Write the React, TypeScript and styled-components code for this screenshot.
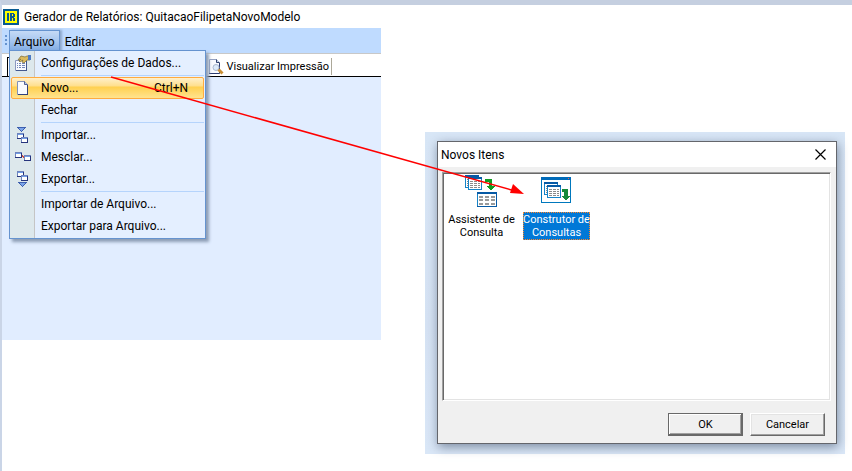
import React from "react";
import styled, { createGlobalStyle, css } from "styled-components";

const Global = createGlobalStyle`
  * { box-sizing: border-box; }
  html, body { margin: 0; background: #fff; }
  body { font: 12px/16px Roboto, "Open Sans", sans-serif; color: #000; }
  button { font: inherit; color: inherit; }
  svg { flex: none; }
`;

const Page = styled.div`
  position: relative;
  display: flex;
  flex-direction: column;
  min-height: 100vh;
  border-top: 5px solid #c5cfe0;
  border-left: 2px solid #cad5e7;
`;

const TitleBar = styled.header`
  display: flex;
  align-items: center;
  gap: 5px;
  height: 23px;
  padding-left: 1px;
  white-space: nowrap;
`;

const Title = styled.h1`
  margin: 0;
  font-size: 12px;
  font-weight: 400;
`;

const Workspace = styled.div`
  display: grid;
  grid-template-columns: 379fr 44fr 420fr 7fr;
  align-items: start;
`;

const Editor = styled.main`
  display: flex;
  flex-direction: column;
  min-width: 0;
  background: #e1edff;
`;

const MenuBar = styled.nav`
  position: relative;
  display: flex;
  align-items: flex-end;
  height: 25px;
  padding-left: 7px;
  background: #bfdbff;
`;

const Grip = styled.svg`
  position: absolute;
  left: 3px;
  top: 7px;
`;

const MenuTitle = styled.button<{ $open?: boolean }>`
  height: 23px;
  padding: 0 4px;
  border: 1px solid transparent;
  border-bottom: 0;
  background: transparent;
  ${(p) =>
    p.$open &&
    css`
      border-color: #6593cf;
      background: linear-gradient(#c5daf6, #a3c4ee 50%, #78a5df);
      box-shadow: 2px 0 2px #8ea9cd;
    `}
`;

const Menu = styled.div`
  position: absolute;
  z-index: 2;
  left: 7px;
  top: 22px;
  width: 197px;
  padding: 1px;
  border: 1px solid #6593cf;
  background: linear-gradient(to right, #dde8ec 24px, #c5c5c5 24px 25px, #e4efff 25px);
  box-shadow: 3px 3px 3px #8d9db5;
`;

const MenuItem = styled.button<{ $hot?: boolean }>`
  display: grid;
  grid-template-columns: 22px 1fr auto;
  column-gap: 7px;
  align-items: center;
  width: 100%;
  height: 22px;
  padding: 0 15px 0 0;
  border: 1px solid transparent;
  border-radius: 2px;
  background: transparent;
  text-align: left;
  white-space: nowrap;
  ${(p) =>
    p.$hot &&
    css`
      border-color: #ffab3f;
      background: linear-gradient(#fff0cb, #ffdf8c 40%, #ffd04f 45%, #ffe38f);
    `}
`;

const IconCell = styled.span`
  display: flex;
  justify-content: center;
`;

const Separator = styled.hr`
  height: 1px;
  margin: 1px 0 1px 30px;
  border: 0;
  background: #b5d4fc;
`;

const TabBar = styled.div`
  display: flex;
  align-items: flex-end;
  justify-content: space-between;
  height: 24px;
  border-top: 1px solid #c8c8c8;
  border-bottom: 1px solid #000;
  background: #fff;
`;

const TabEdge = styled.span`
  width: 6px;
  height: 19px;
  margin-left: 5px;
  border-top: 1px solid #000;
  border-left: 1px solid #000;
`;

const PreviewTab = styled.button`
  display: flex;
  align-items: center;
  gap: 2px;
  height: 17px;
  margin: 0 49px 1px 0;
  padding: 1px 2px 0 0;
  border: 0;
  border-right: 1px solid #aca899;
  background: transparent;
  font: 11px/16px Roboto, Arial, sans-serif;
  white-space: nowrap;
`;

const Canvas = styled.section`
  height: 263px;
`;

const DialogArea = styled.section`
  grid-column: 3;
  margin-top: 104px;
  padding: 9px 8px 10px 12px;
  background: linear-gradient(#d8e6f6, #d5e2f3 60%, #dae7f7);
`;

const Dialog = styled.div`
  display: flex;
  flex-direction: column;
  border: 1px solid #64666c;
  background: #f0f0f0;
  box-shadow: 1px 3px 10px #7d8ca2;
`;

const DialogHeader = styled.div`
  display: flex;
  align-items: center;
  justify-content: space-between;
  height: 25px;
  padding: 0 10px 0 3px;
  background: #fff;
`;

const DialogTitle = styled.h2`
  margin: 0;
  font-size: 12px;
  font-weight: 400;
`;

const CloseButton = styled.button`
  display: flex;
  padding: 0;
  border: 0;
  background: transparent;
`;

const ItemList = styled.div`
  display: flex;
  align-items: flex-start;
  gap: 8px;
  height: 229px;
  margin: 5px 5px 0 4px;
  padding: 1px 5px;
  border: 1px solid;
  border-color: #a0a0a0 #fff #fff #a0a0a0;
  box-shadow: inset 1px 1px #696969, inset -1px -1px #e3e3e3;
  background: #fff;
`;

const Item = styled.button`
  display: flex;
  flex-direction: column;
  align-items: center;
  gap: 4px;
  width: 67px;
  padding: 0;
  border: 0;
  background: transparent;
  font: 11px/13px Roboto, Arial, sans-serif;
`;

const ItemLabel = styled.span<{ $selected?: boolean }>`
  width: 100%;
  padding: 1px 0;
  white-space: nowrap;
  ${(p) =>
    p.$selected &&
    css`
      outline: 1px dotted #ff8728;
      outline-offset: -1px;
      background: #0078d7;
      color: #fff;
    `}
`;

const Actions = styled.div`
  display: flex;
  justify-content: flex-end;
  gap: 7px;
  padding: 12px 11px 7px;
`;

const ActionButton = styled.button<{ $primary?: boolean }>`
  width: 75px;
  height: 23px;
  padding: 0;
  border: 1px solid;
  border-color: #fff #696969 #696969 #fff;
  background: #f0f0f0;
  box-shadow: inset -1px -1px #a0a0a0, inset 1px 1px #e3e3e3;
  font: 11px/13px Roboto, Arial, sans-serif;
  ${(p) =>
    p.$primary &&
    css`
      border-color: #696969;
      box-shadow: inset -1px -1px #696969, inset 1px 1px #fff, inset -2px -2px #a0a0a0;
    `}
`;

const Arrow = styled.svg`
  position: absolute;
  z-index: 3;
  left: 108px;
  top: 71px;
  pointer-events: none;
`;

function LogoIcon() {
  return (
    <svg width="16" height="16" viewBox="0 0 16 16" shapeRendering="crispEdges" aria-hidden="true">
      <path fill="#075a91" d="M0 0h16v16H0z" />
      <path fill="#ff0" d="M2 2h12v12H2z" />
      <path fill="#075a91" fillRule="evenodd" d="M4 4h2v8H4zM7 4h4v1h1v3h-1v1h1v3h-2V9H9v3H7zM9 5v2h1V5z" />
    </svg>
  );
}

function SettingsIcon() {
  return (
    <svg width="16" height="16" viewBox="0 0 16 16" aria-hidden="true">
      <path fill="#f8faff" stroke="#8b98c0" d="M.5 5.500h11v10H.5z" />
      <path fill="#43588f" d="M11 6h1v10H1v-1h10z" />
      <path fill="#7186b8" d="M2 8h1v1H2zM4 8h2v1H4zM7 8h3v1H7zM2 10h1v1H2zM4 10h2v1H4zM7 10h3v1H7zM2 12h1v1H2zM4 12h2v1H4zM7 12h3v1H7z" />
      <path fill="#dcbb5c" stroke="#83743c" strokeWidth=".8" d="M3 5 6 1l4 1 2-1h3v4h-3l-3 3-2-1 1-2-3 2-1-1 2-2-2 1z" />
      <path fill="#4d7bc5" d="M13 0h3v5h-3z" />
    </svg>
  );
}

function PageIcon() {
  return (
    <svg width="12" height="14" viewBox="0 0 12 14" aria-hidden="true">
      <path fill="#f9fbff" stroke="#8291b9" d="M.5.5h7l3 3v10H.5z" />
      <path fill="#b9c9e5" stroke="#32437b" strokeWidth=".8" d="M7.500.5v3h3" />
      <path fill="#32437b" d="M10 4h1v10H1v-1h9z" />
    </svg>
  );
}

function MiniWindow({ x, y }: { x: number; y: number }) {
  return (
    <g transform={`translate(${x} ${y})`}>
      <path fill="#6f83bd" d="M0 0h7v6H0z" />
      <path fill="#27347c" d="M6 1h1v5H0V5h6z" />
      <path fill="#6f9ee6" d="M1 1h5v1H1z" />
      <path fill="#fff" d="M1 2h5v3H1z" />
    </g>
  );
}

function TransferIcon({ kind }: { kind: "import" | "merge" | "export" }) {
  return (
    <svg width="16" height="16" viewBox="0 0 16 16" shapeRendering="crispEdges" aria-hidden="true">
      {kind === "merge" ? (
        <>
          <MiniWindow x={0} y={3} />
          <MiniWindow x={9} y={6} />
          <path fill="#c94e45" d="M7 6h1v1h1v2H8V8H7z" />
        </>
      ) : (
        <>
          <MiniWindow x={2} y={kind === "import" ? 6 : 0} />
          <MiniWindow x={6} y={kind === "import" ? 10 : 4} />
          <path
            transform={kind === "import" ? undefined : "translate(1 11)"}
            fill="#7ba5e9"
            stroke="#3e5fae"
            d="M2.500.5h8l-4 4z"
          />
        </>
      )}
    </svg>
  );
}

function PreviewIcon() {
  return (
    <svg width="16" height="16" viewBox="0 0 16 16" aria-hidden="true">
      <path fill="#f8faff" stroke="#95a2c2" d="M1.500.5h7l3 3v11h-10z" />
      <path fill="#c5d3e9" stroke="#334571" d="M8.500.5v3h3" />
      <path stroke="#2c3b70" d="M1 14.500h10.500V4" fill="none" />
      <circle cx="8" cy="8.500" r="3" fill="#dceafa" stroke="#a9b8cf" />
      <path stroke="#c98f35" strokeWidth="3" d="m10.500 10.500 4 4" />
    </svg>
  );
}

function Sheet({ x, y }: { x: number; y: number }) {
  return (
    <g transform={`translate(${x} ${y})`}>
      <path fill="#fff" stroke="#1684c8" d="M.5.5h13v12H.5z" />
      <path fill="#075aa5" d="M0 0h14v2H0z" />
      <path fill="#8a8a8a" d="M2 4h3v1H2zM6 4h3v1H6zM10 4h2v1h-2zM2 6h3v1H2zM6 6h3v1H6zM10 6h2v1h-2zM2 8h3v1H2zM6 8h3v1H6zM10 8h2v1h-2zM2 10h3v1H2zM6 10h3v1H6zM10 10h2v1h-2z" />
    </g>
  );
}

function WizardIcon() {
  return (
    <svg width="34" height="34" viewBox="0 0 34 34" shapeRendering="crispEdges" aria-hidden="true">
      <Sheet x={0} y={1} />
      <Sheet x={3} y={3} />
      <path fill="#109a20" d="M20 5h6l1 1v6h3l-4 5-4-5h2V8h-4z" />
      <path fill="#fff" stroke="#1684c8" d="M12.500 18.500h19v14h-19z" />
      <path fill="#075aa5" d="M12 18h20v2H12zM31 20h1v13H12v-1h19z" />
      <path fill="#9a9a9a" d="M14 22h4v2h-4zM20 22h4v2h-4zM26 22h4v2h-4zM14 25h4v2h-4zM20 25h4v2h-4zM26 25h4v2h-4zM14 29h4v2h-4zM20 29h4v2h-4zM26 29h4v2h-4z" />
    </svg>
  );
}

function BuilderIcon() {
  return (
    <svg width="34" height="34" viewBox="0 0 34 34" shapeRendering="crispEdges" aria-hidden="true">
      <path fill="#fff" stroke="#0078bd" d="M1.500 3.500h29v25h-29z" />
      <path fill="#006ab8" d="M1 3h30v3H1z" />
      <path fill="#ff5b48" d="M28 4h1v1h-1z" />
      <Sheet x={4} y={8} />
      <Sheet x={7} y={11} />
      <path fill="#14893a" d="M22 15h5l1 1v6h2l-4 5-4-5h2v-4h-2z" />
    </svg>
  );
}

export default function App() {
  return (
    <>
      <Global />
      <Page>
        <TitleBar>
          <LogoIcon />
          <Title>Gerador de Relatórios: QuitacaoFilipetaNovoModelo</Title>
        </TitleBar>
        <Workspace>
          <Editor>
            <MenuBar>
              <Grip width="2" height="12" viewBox="0 0 2 12" aria-hidden="true">
                <path fill="#6593cf" d="M0 0h2v2H0zM0 4h2v2H0zM0 8h2v2H0z" />
              </Grip>
              <MenuTitle $open aria-expanded="true">Arquivo</MenuTitle>
              <MenuTitle>Editar</MenuTitle>
              <Menu role="menu">
                <MenuItem role="menuitem"><IconCell><SettingsIcon /></IconCell>Configurações de Dados...</MenuItem>
                <Separator />
                <MenuItem role="menuitem" $hot><IconCell><PageIcon /></IconCell><span>Novo...</span><span>Ctrl+N</span></MenuItem>
                <MenuItem role="menuitem"><IconCell />Fechar</MenuItem>
                <Separator />
                <MenuItem role="menuitem"><IconCell><TransferIcon kind="import" /></IconCell>Importar...</MenuItem>
                <MenuItem role="menuitem"><IconCell><TransferIcon kind="merge" /></IconCell>Mesclar...</MenuItem>
                <MenuItem role="menuitem"><IconCell><TransferIcon kind="export" /></IconCell>Exportar...</MenuItem>
                <Separator />
                <MenuItem role="menuitem"><IconCell />Importar de Arquivo...</MenuItem>
                <MenuItem role="menuitem"><IconCell />Exportar para Arquivo...</MenuItem>
              </Menu>
            </MenuBar>
            <TabBar>
              <TabEdge />
              <PreviewTab><PreviewIcon />Visualizar Impressão</PreviewTab>
            </TabBar>
            <Canvas />
          </Editor>
          <DialogArea>
            <Dialog role="dialog" aria-labelledby="dialog-title">
              <DialogHeader>
                <DialogTitle id="dialog-title">Novos Itens</DialogTitle>
                <CloseButton aria-label="Fechar">
                  <svg width="11" height="11" viewBox="0 0 11 11" aria-hidden="true">
                    <path stroke="#000" strokeWidth="1.200" d="m.5.5 10 10m0-10-10 10" />
                  </svg>
                </CloseButton>
              </DialogHeader>
              <ItemList>
                <Item><WizardIcon /><ItemLabel>Assistente de<br />Consulta</ItemLabel></Item>
                <Item aria-pressed="true"><BuilderIcon /><ItemLabel $selected>Construtor de<br />Consultas</ItemLabel></Item>
              </ItemList>
              <Actions>
                <ActionButton $primary>OK</ActionButton>
                <ActionButton>Cancelar</ActionButton>
              </Actions>
            </Dialog>
          </DialogArea>
        </Workspace>
        <Arrow width="416" height="122" viewBox="0 0 416 122" aria-hidden="true">
          <path stroke="#f00" strokeWidth="1.500" d="m1 1 404 114" />
          <path fill="#f00" d="m414 118-14-1 3-9z" />
        </Arrow>
      </Page>
    </>
  );
}
